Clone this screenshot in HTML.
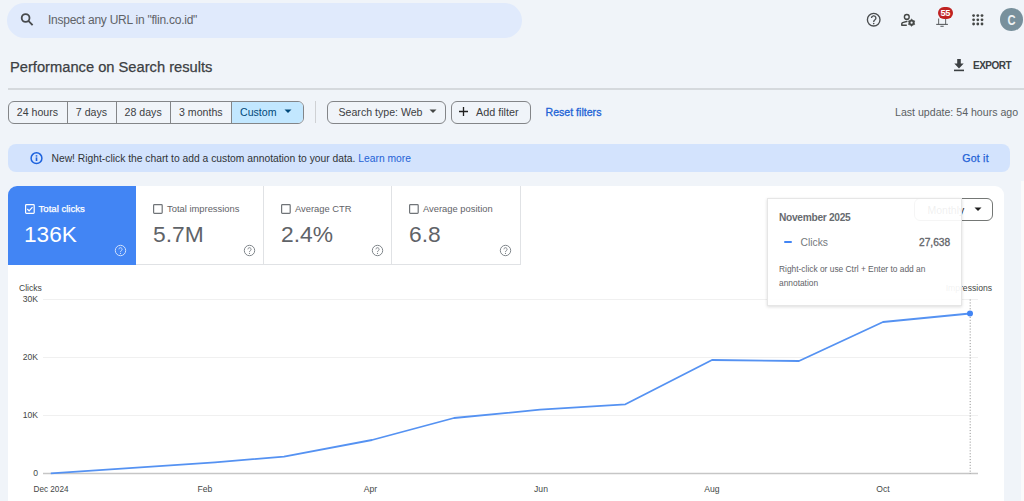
<!DOCTYPE html>
<html><head><meta charset="utf-8">
<style>
*{margin:0;padding:0;box-sizing:border-box}
html,body{width:1024px;height:501px;overflow:hidden;background:#f0f4f9;font-family:"Liberation Sans",sans-serif;color:#1f1f1f}
.a{position:absolute;white-space:nowrap}
#search{left:7px;top:3px;width:515px;height:35px;border-radius:18px;background:#e0eafc}
.t{position:absolute;white-space:nowrap;line-height:1}
.btn{position:absolute;border:1px solid #838588;border-radius:6px}
.seg{position:absolute;top:0;height:100%;border-left:1px solid #838588}
</style></head><body>
<!-- header -->
<div class="a" id="search"></div>
<svg class="a" style="left:18px;top:11px" width="16" height="16" viewBox="0 0 16 16"><circle cx="7.6" cy="7.0" r="3.9" fill="none" stroke="#474a4d" stroke-width="1.8"/><line x1="10.4" y1="9.9" x2="14.6" y2="14.1" stroke="#474a4d" stroke-width="1.8"/></svg>
<div class="t" style="left:48px;top:13.5px;font-size:12px;color:#5f6368;letter-spacing:-0.25px">Inspect any URL in "flin.co.id"</div>

<!-- header icons -->
<svg class="a" style="left:864px;top:10px" width="20" height="20" viewBox="0 0 20 20"><circle cx="9.7" cy="9.7" r="6.3" fill="none" stroke="#4a4d4f" stroke-width="1.35"/><path d="M7.5 8.1a2.2 2.2 0 1 1 3.3 1.9c-0.7 0.45-1.1 0.9-1.1 1.9" fill="none" stroke="#4a4d4f" stroke-width="1.35"/><circle cx="9.7" cy="13.6" r="0.8" fill="#4a4d4f"/></svg>
<svg class="a" style="left:898px;top:10px" width="20" height="20" viewBox="0 0 20 20"><circle cx="8.8" cy="6.9" r="2.4" fill="none" stroke="#444746" stroke-width="1.4"/><path d="M9.4 11.3L4.6 12.6Q3.8 12.9 3.8 13.7V15.2H8.8" fill="none" stroke="#444746" stroke-width="1.5" stroke-linejoin="round"/><path d="M13.60 9.10 L14.95 10.36 L16.72 10.90 L16.30 12.70 L16.72 14.50 L14.95 15.04 L13.60 16.30 L12.25 15.04 L10.48 14.50 L10.90 12.70 L10.48 10.90 L12.25 10.36Z" fill="#444746" stroke="#444746" stroke-width="0.6" stroke-linejoin="round"/><circle cx="13.6" cy="12.7" r="1.1" fill="#f0f4f9"/></svg>
<svg class="a" style="left:934px;top:12px" width="16" height="16" viewBox="0 0 16 16"><path d="M4.6 12.4V6.5M11.6 12.4V6.5" fill="none" stroke="#6f7275" stroke-width="1.1"/><line x1="2.2" y1="12.4" x2="13.9" y2="12.4" stroke="#5a5d60" stroke-width="1.1"/><line x1="6.4" y1="14.3" x2="9.7" y2="14.3" stroke="#5f6368" stroke-width="1.1"/></svg>
<div class="a" style="left:937.5px;top:7.3px;width:15.5px;height:11.8px;border-radius:6px;background:#bf2222;color:#fff;font-size:9.2px;font-weight:bold;text-align:center;line-height:12px;letter-spacing:-0.4px">55</div>
<svg class="a" style="left:971px;top:13px" width="13" height="13" viewBox="0 0 13 13"><g fill="#444746"><circle cx="2.6" cy="2.6" r="1.4"/><circle cx="6.8" cy="2.6" r="1.4"/><circle cx="11.0" cy="2.6" r="1.4"/><circle cx="2.6" cy="6.8" r="1.4"/><circle cx="6.8" cy="6.8" r="1.4"/><circle cx="11.0" cy="6.8" r="1.4"/><circle cx="2.6" cy="11.0" r="1.4"/><circle cx="6.8" cy="11.0" r="1.4"/><circle cx="11.0" cy="11.0" r="1.4"/></g></svg>
<div class="a" style="left:1000px;top:8.4px;width:22.7px;height:22.7px;border-radius:50%;background:#78909c;color:#eef2f3;font-size:15.5px;font-weight:bold;text-align:center;line-height:23px"><span style="display:inline-block;transform:scaleX(0.72)">C</span></div>

<!-- title -->
<div class="t" style="left:10px;top:60px;font-size:14.7px;color:#3c4043;-webkit-text-stroke:0.25px #3c4043">Performance on Search results</div>
<svg class="a" style="left:952px;top:58px" width="14" height="14" viewBox="0 0 14 14"><path d="M5.2 1h3.6v4.6h2.9L7 10.4 2.3 5.6h2.9z" fill="#3c4043"/><rect x="2" y="11.6" width="10" height="1.6" fill="#3c4043"/></svg>
<div class="t" style="left:973px;top:61.2px;font-size:10px;font-weight:bold;color:#3c4043;letter-spacing:-0.5px">EXPORT</div>
<div class="a" style="left:8px;top:88px;width:1016px;height:2px;background:#d5d9dd"></div>

<!-- filter row -->
<div class="btn" style="left:8px;top:101px;width:296px;height:23px;overflow:hidden">
  <div class="seg" style="left:222px;width:74px;background:#c2e7ff"></div>
  <div class="seg" style="left:58px"></div>
  <div class="seg" style="left:107px"></div>
  <div class="seg" style="left:161px"></div>
</div>
<div class="t" style="left:16.8px;top:107px;font-size:10.6px;color:#3c4043">24 hours</div>
<div class="t" style="left:75.8px;top:107px;font-size:10.6px;color:#3c4043">7 days</div>
<div class="t" style="left:124.6px;top:107px;font-size:10.6px;color:#3c4043">28 days</div>
<div class="t" style="left:179px;top:107px;font-size:10.6px;color:#3c4043">3 months</div>
<div class="t" style="left:240px;top:107px;font-size:10.6px;color:#00497a">Custom</div>
<svg class="a" style="left:284px;top:109px" width="8" height="5" viewBox="0 0 8 5"><path d="M0.5 0.5h7L4 4z" fill="#00497a"/></svg>
<div class="a" style="left:315px;top:101px;width:1px;height:22px;background:#cfd1d4"></div>

<div class="btn" style="left:327px;top:101px;width:119px;height:23px"></div>
<div class="t" style="left:338.5px;top:107px;font-size:10.6px;color:#3c4043">Search type: Web</div>
<svg class="a" style="left:429px;top:109px" width="8" height="5" viewBox="0 0 8 5"><path d="M0.5 0.5h7L4 4z" fill="#444746"/></svg>

<div class="btn" style="left:451px;top:101px;width:80px;height:23px"></div>
<svg class="a" style="left:458px;top:106px" width="11" height="11" viewBox="0 0 11 11"><path d="M5.5 1v9M1 5.5h9" stroke="#1f1f1f" stroke-width="1.3"/></svg>
<div class="t" style="left:476px;top:107px;font-size:10.8px;color:#3c4043">Add filter</div>
<div class="t" style="left:545.5px;top:107px;font-size:10.6px;color:#1d63d6;-webkit-text-stroke:0.3px #1d63d6">Reset filters</div>
<div class="t" style="left:895px;top:107px;font-size:10.6px;color:#5b5f63">Last update: 54 hours ago</div>

<!-- banner -->
<div class="a" style="left:8px;top:144px;width:1002px;height:28px;border-radius:8px;background:#d3e3fd"></div>
<svg class="a" style="left:29.5px;top:152px" width="13" height="13" viewBox="0 0 13 13"><circle cx="6.5" cy="6.2" r="5.4" fill="none" stroke="#1d62dd" stroke-width="1.5"/><rect x="5.7" y="5.4" width="1.6" height="3.6" fill="#1d62dd"/><rect x="5.7" y="3.2" width="1.6" height="1.4" fill="#1d62dd"/></svg>
<div class="t" style="left:51.5px;top:153.8px;font-size:10.3px;color:#303336">New! Right-click the chart to add a custom annotation to your data. <span style="color:#1f62d6">Learn more</span></div>
<div class="t" style="left:962.3px;top:152.7px;font-size:10.6px;color:#1f62d6;letter-spacing:0.2px;-webkit-text-stroke:0.25px #1f62d6">Got it</div>

<!-- panel -->
<div class="a" style="left:8px;top:186px;width:996px;height:330px;border-radius:9px;background:#fff"></div>
<div class="a" style="left:1021px;top:181px;width:3px;height:320px;background:#fafafa"></div>

<!-- cards -->
<div class="a" style="left:8px;top:186px;width:128px;height:79px;background:#4285f4;border-top-left-radius:9px"></div>
<div class="a" style="left:136px;top:186px;width:128px;height:79px;border-right:1px solid #e0e2e5;border-bottom:1px solid #e0e2e5"></div>
<div class="a" style="left:264px;top:186px;width:128px;height:79px;border-right:1px solid #e0e2e5;border-bottom:1px solid #e0e2e5"></div>
<div class="a" style="left:392px;top:186px;width:129px;height:79px;border-right:1px solid #e0e2e5;border-bottom:1px solid #e0e2e5"></div>

<svg class="a" style="left:24.7px;top:204.2px" width="10" height="10" viewBox="0 0 10 10"><rect x="0.6" y="0.6" width="8.6" height="8.8" rx="0.8" fill="none" stroke="#fff" stroke-width="1.2"/><path d="M2.3 5l1.8 1.8 3.4-3.6" fill="none" stroke="#fff" stroke-width="1.2"/></svg>
<div class="t" style="left:38.5px;top:203.5px;font-size:9.6px;color:#fff;-webkit-text-stroke:0.25px #fff">Total clicks</div>
<div class="t" style="left:24px;top:224px;font-size:22.6px;color:#fff">136K</div>
<svg class="a" style="left:114px;top:244px" width="13" height="13" viewBox="0 0 13 13"><circle cx="6.5" cy="6.5" r="5.2" fill="none" stroke="#cfe0fc" stroke-width="1"/><path d="M4.9 5.3a1.6 1.6 0 1 1 2.4 1.4c-0.5 0.3-0.8 0.6-0.8 1.3" fill="none" stroke="#cfe0fc" stroke-width="1"/><circle cx="6.5" cy="9.4" r="0.6" fill="#cfe0fc"/></svg>

<svg class="a" style="left:153px;top:204.3px" width="10" height="10" viewBox="0 0 10 10"><rect x="0.6" y="0.6" width="8.6" height="8.8" rx="0.8" fill="none" stroke="#707478" stroke-width="1.2"/></svg>
<div class="t" style="left:167px;top:203.5px;font-size:9.4px;color:#5f6368">Total impressions</div>
<div class="t" style="left:153px;top:222.6px;font-size:22.8px;color:#5f6368">5.7M</div>
<svg class="a" style="left:242.5px;top:244px" width="13" height="13" viewBox="0 0 13 13"><circle cx="6.5" cy="6.5" r="5.2" fill="none" stroke="#80868b" stroke-width="1"/><path d="M4.9 5.3a1.6 1.6 0 1 1 2.4 1.4c-0.5 0.3-0.8 0.6-0.8 1.3" fill="none" stroke="#80868b" stroke-width="1"/><circle cx="6.5" cy="9.4" r="0.6" fill="#80868b"/></svg>

<svg class="a" style="left:281px;top:204.3px" width="10" height="10" viewBox="0 0 10 10"><rect x="0.6" y="0.6" width="8.6" height="8.8" rx="0.8" fill="none" stroke="#707478" stroke-width="1.2"/></svg>
<div class="t" style="left:295px;top:203.5px;font-size:9.4px;color:#5f6368">Average CTR</div>
<div class="t" style="left:281px;top:222.6px;font-size:22.8px;color:#5f6368">2.4%</div>
<svg class="a" style="left:370.5px;top:244px" width="13" height="13" viewBox="0 0 13 13"><circle cx="6.5" cy="6.5" r="5.2" fill="none" stroke="#80868b" stroke-width="1"/><path d="M4.9 5.3a1.6 1.6 0 1 1 2.4 1.4c-0.5 0.3-0.8 0.6-0.8 1.3" fill="none" stroke="#80868b" stroke-width="1"/><circle cx="6.5" cy="9.4" r="0.6" fill="#80868b"/></svg>

<svg class="a" style="left:409px;top:204.3px" width="10" height="10" viewBox="0 0 10 10"><rect x="0.6" y="0.6" width="8.6" height="8.8" rx="0.8" fill="none" stroke="#707478" stroke-width="1.2"/></svg>
<div class="t" style="left:423px;top:203.5px;font-size:9.4px;color:#5f6368">Average position</div>
<div class="t" style="left:409px;top:222.6px;font-size:22.8px;color:#5f6368">6.8</div>
<svg class="a" style="left:498.5px;top:244px" width="13" height="13" viewBox="0 0 13 13"><circle cx="6.5" cy="6.5" r="5.2" fill="none" stroke="#80868b" stroke-width="1"/><path d="M4.9 5.3a1.6 1.6 0 1 1 2.4 1.4c-0.5 0.3-0.8 0.6-0.8 1.3" fill="none" stroke="#80868b" stroke-width="1"/><circle cx="6.5" cy="9.4" r="0.6" fill="#80868b"/></svg>

<!-- monthly dropdown -->
<div class="btn" style="left:914px;top:198px;width:79px;height:23px;border-color:#747775"></div>
<div class="t" style="left:927.5px;top:205px;font-size:10.5px;color:#1f1f1f">Monthly</div>
<svg class="a" style="left:973.8px;top:207px" width="8" height="5" viewBox="0 0 8 5"><path d="M0.5 0.5h7L4 4z" fill="#1f1f1f"/></svg>

<!-- chart -->
<svg class="a" style="left:0;top:270px" width="1024" height="231" viewBox="0 270 1024 231">
 <g stroke="#f0f0f0" stroke-width="1">
  <line x1="43" y1="299.5" x2="978" y2="299.5"/>
  <line x1="43" y1="357.5" x2="978" y2="357.5"/>
  <line x1="43" y1="415.5" x2="978" y2="415.5"/>
 </g>
 <line x1="43" y1="473.5" x2="978" y2="473.5" stroke="#c6c6c6" stroke-width="1.6"/>
 <line x1="970.2" y1="299.5" x2="970.2" y2="474" stroke="#8a8a8a" stroke-width="0.9" stroke-dasharray="1.1 1.8"/>
 <polyline fill="none" stroke="#5592f2" stroke-width="1.8" stroke-linejoin="round" points="50.8,473.4 215,462.4 284,456.6 372,440 454,418 540,409.7 625.4,404.3 712,360 799,361 883,322 970,313.5"/>
 <circle cx="970" cy="313.5" r="3" fill="#4285f4"/>
 <g font-family="Liberation Sans" font-size="8.6" fill="#444746">
  <text x="19" y="290.6">Clicks</text>
  <text x="38" y="302" text-anchor="end">30K</text>
  <text x="38" y="360" text-anchor="end">20K</text>
  <text x="38" y="418" text-anchor="end">10K</text>
  <text x="38" y="476" text-anchor="end">0</text>
  <text x="33.5" y="491.5" textLength="35" lengthAdjust="spacingAndGlyphs">Dec 2024</text>
  <text x="205" y="491.5" text-anchor="middle">Feb</text>
  <text x="370.5" y="491.5" text-anchor="middle">Apr</text>
  <text x="541" y="491.5" text-anchor="middle">Jun</text>
  <text x="712" y="491.5" text-anchor="middle">Aug</text>
  <text x="883" y="491.5" text-anchor="middle">Oct</text>
  <text x="992" y="291" text-anchor="end">Impressions</text>
 </g>
</svg>

<!-- tooltip -->
<div class="a" style="left:767px;top:198px;width:195px;height:108px;background:rgba(255,255,255,0.93);border:1px solid #e6e6e6;box-shadow:0 1px 3px rgba(0,0,0,0.14)"></div>
<div class="t" style="left:779px;top:212.8px;font-size:10.2px;font-weight:bold;color:#676b6f;letter-spacing:-0.3px">November 2025</div>
<div class="a" style="left:784px;top:240.5px;width:7.6px;height:2.8px;border-radius:1.4px;background:#4285f4"></div>
<div class="t" style="left:800.5px;top:237.5px;font-size:10.3px;color:#75797d">Clicks</div>
<div class="t" style="left:919px;top:237.5px;font-size:10.2px;color:#5f6368;-webkit-text-stroke:0.3px #5f6368">27,638</div>
<div class="t" style="left:779px;top:264.5px;font-size:8.4px;color:#5f6368;line-height:14px;margin-top:-3px">Right-click or use Ctrl + Enter to add an<br>annotation</div>
</body></html>
